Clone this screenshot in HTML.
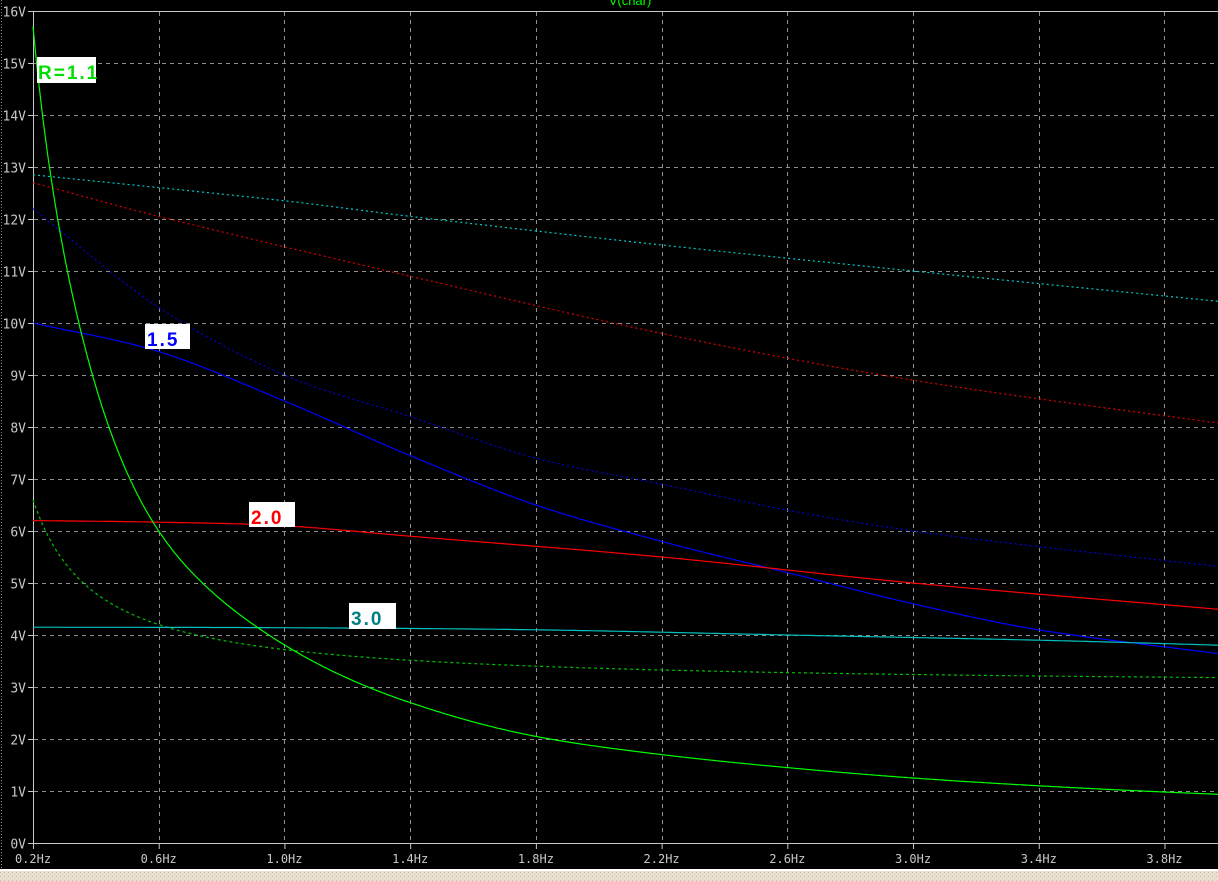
<!DOCTYPE html>
<html><head><meta charset="utf-8"><style>
html,body{margin:0;padding:0;background:#000;width:1218px;height:881px;overflow:hidden}
svg{display:block}
</style></head><body>
<svg id="s" width="1218" height="881" xmlns="http://www.w3.org/2000/svg">
<defs><pattern id="dots" width="4" height="4" patternUnits="userSpaceOnUse"><rect width="4" height="4" fill="#e9e0cf"/><rect width="1" height="1" fill="#c8bfae"/><rect x="2" y="2" width="1" height="1" fill="#d8cfbe"/></pattern></defs>
<rect width="1218" height="870" fill="#000"/>
<rect y="869" width="1218" height="2" fill="#fff"/>
<rect y="871" width="1218" height="10" fill="url(#dots)"/>
<line x1="1.5" y1="0" x2="1.5" y2="869" stroke="#888" stroke-dasharray="1 2"/>
<g id="grid" stroke="#909090" stroke-width="1" stroke-dasharray="4 4"></g>
<line x1="33.5" y1="11" x2="33.5" y2="844" stroke="#c8c8c8"/>
<line x1="33" y1="11.5" x2="1218" y2="11.5" stroke="#c8c8c8"/>
<line x1="28" y1="843.5" x2="1218" y2="843.5" stroke="#c8c8c8"/>
<g id="lab" fill="#c8c8c8" style="font-family:'DejaVu Sans Mono','Liberation Mono',monospace;font-size:12px"></g>
<text x="630" y="5" fill="#00ff00" style="font-family:'Liberation Sans',sans-serif;font-size:13px" text-anchor="middle">V(char)</text>
<g id="curves" fill="none"></g>
<g style="font-family:'Liberation Sans',sans-serif;font-size:19px;font-weight:bold;letter-spacing:2px">
<rect x="37" y="57" width="59" height="26" fill="#fff"/>
<text x="38" y="79" fill="#00e000">R=1.1</text>
<rect x="145" y="324" width="45" height="25" fill="#fff"/>
<text x="147" y="346" fill="#0000ff">1.5</text>
<rect x="249" y="502" width="46" height="25" fill="#fff"/>
<text x="251" y="524" fill="#ff0000">2.0</text>
<rect x="349" y="603" width="47" height="26" fill="#fff"/>
<text x="351" y="625" fill="#008080">3.0</text>
</g>
</svg>
<script>
var NS="http://www.w3.org/2000/svg";
function X(f){return 33+(f-0.2)*314.3}
function Y(v){return 843-v*52}
var g=document.getElementById('grid'),lab=document.getElementById('lab'),c=document.getElementById('curves'),s=document.getElementById('s');
function el(t,a,p){var e=document.createElementNS(NS,t);for(var k in a)e.setAttribute(k,a[k]);p.appendChild(e);return e}
for(var v=1;v<=15;v++){var y=Y(v)+0.5;el('line',{x1:34,y1:y,x2:1218,y2:y},g);}
for(var v=0;v<=16;v++){var y=Y(v)+0.5;el('line',{x1:28,y1:y,x2:34,y2:y,stroke:'#c8c8c8'},s);var t=el('text',{x:26,y:y+5,'text-anchor':'end',style:'font-size:13px'},lab);t.textContent=v+'V';}
for(var i=1;i<=9;i++){var f=0.2+i*0.4,x=Math.round(X(f))+0.5;el('line',{x1:x,y1:12,x2:x,y2:843},g);}
for(var i=0;i<=9;i++){var f=0.2+i*0.4,x=X(f);el('line',{x1:x+0.5,y1:843,x2:x+0.5,y2:849,stroke:'#c8c8c8'},s);var t=el('text',{x:x,y:863,'text-anchor':'middle'},lab);t.textContent=f.toFixed(1)+'Hz';}
function interp(pts){return function(f){for(var i=0;i<pts.length-1;i++){var a=pts[i],b=pts[i+1];if(f<=b[0]||i==pts.length-2){var t=(f-a[0])/(b[0]-a[0]);
var p0=pts[Math.max(i-1,0)],p3=pts[Math.min(i+2,pts.length-1)];
var m1=(b[1]-p0[1])/(b[0]-p0[0])*(b[0]-a[0]),m2=(p3[1]-a[1])/(p3[0]-a[0])*(b[0]-a[0]);
var t2=t*t,t3=t2*t;return (2*t3-3*t2+1)*a[1]+(t3-2*t2+t)*m1+(-2*t3+3*t2)*b[1]+(t3-t2)*m2;}}}}
function curve(fn,col,dash){var d='';for(var f=0.2;f<=4.02;f+=0.005){d+=(d?'L':'M')+X(f).toFixed(1)+' '+Y(fn(f)).toFixed(1);}var a={d:d,stroke:col,'stroke-width':1.2};if(dash)a['stroke-dasharray']=dash;el('path',a,c);}
curve(interp([[0.2,12.85],[1.0,12.35],[1.4,12.05],[2.2,11.5],[3.0,11.0],[4.0,10.4]]),'#00c8c8','2 3');
curve(interp([[0.2,12.7],[0.6,12.05],[1.4,10.9],[2.2,9.8],[3.0,8.9],[4.0,8.05]]),'#e00000','2 3');
curve(interp([[0.2,12.2],[0.6,10.3],[1.0,9.0],[1.4,8.2],[1.8,7.4],[2.2,6.9],[2.6,6.4],[3.0,6.0],[3.4,5.7],[4.0,5.3]]),'#0000e0','2 3');
curve(function(f){return 3.0+0.72/f},'#00c000','3 3');
curve(interp([[0.2,10],[0.6,9.45],[1.0,8.5],[1.4,7.45],[1.8,6.5],[2.2,5.8],[2.6,5.2],[3.0,4.6],[3.4,4.1],[4.0,3.62]]),'#0000ff');
curve(interp([[0.2,6.2],[0.6,6.17],[1.0,6.1],[1.4,5.9],[2.2,5.5],[3.0,5.0],[4.0,4.48]]),'#ff0000');
curve(interp([[0.2,4.15],[1.0,4.14],[1.8,4.1],[2.6,4.0],[3.4,3.9],[4.0,3.8]]),'#00c0c0');
curve(function(f){var pts=[[0.2,15.7],[0.35,9.9],[0.6,6.0],[0.95,4.0],[1.4,2.7],[1.8,2.05],[2.2,1.7],[2.6,1.45],[3.0,1.25],[3.4,1.1],[4.0,0.93]];
var lp=pts.map(function(p){return [Math.log(p[0]),Math.log(p[1])]});return Math.exp(interp(lp)(Math.log(f)));},'#00ff00');
</script>
</body></html>
